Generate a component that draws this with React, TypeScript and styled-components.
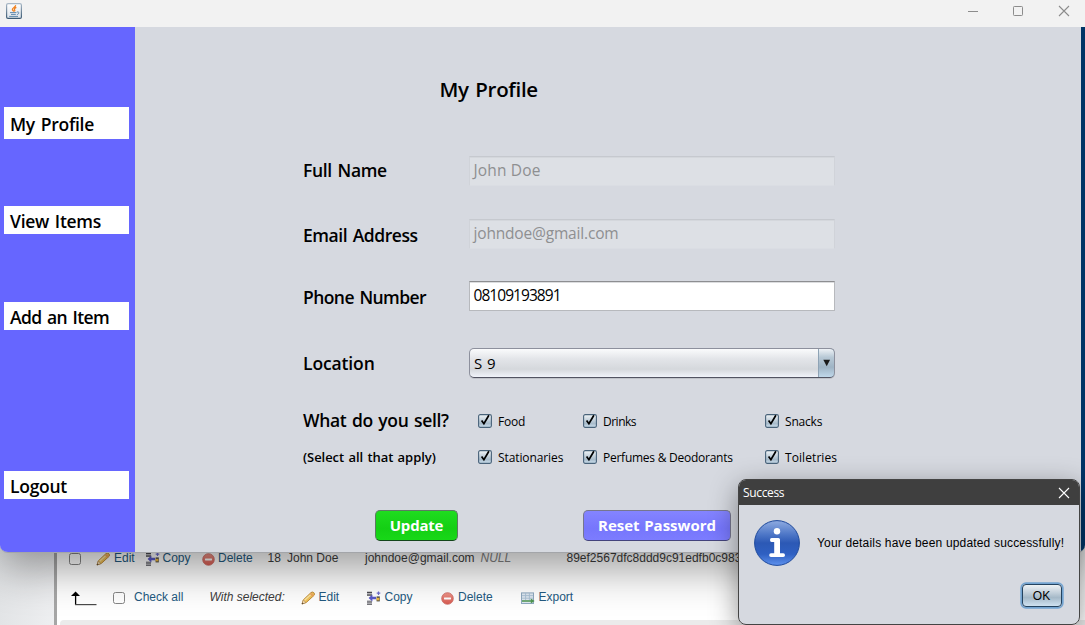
import React from "react";
import styled, { createGlobalStyle } from "styled-components";

const GlobalStyle = createGlobalStyle`
  * { box-sizing: border-box; }
  body { margin: 0; overflow: hidden; }
`;

const humanist = `"Open Sans", "Noto Sans", sans-serif`;
const arial = `"Liberation Sans", Arial, sans-serif`;

const Desktop = styled.div`
  position: relative;
  width: 1085px;
  height: 625px;
  overflow: hidden;
  background: #fff;
  font-family: ${humanist};
  color: #000;
`;

/* ---------- browser page behind the application ---------- */

const BrowserPage = styled.div`
  display: flex;
  height: 625px;
  padding-top: 540px;
  background: #fff;
  font: 12px/16px ${arial};
`;

const NavPane = styled.div`
  flex: none;
  width: 57px;
  border-right: 3px solid #a6a6a6;
  background: linear-gradient(90deg, #e2e4e6, #eeeff1);
`;

const PageBody = styled.div`
  flex: 1;
  display: flex;
  flex-direction: column;
`;

const TableRow = styled.div<{ $top: number; $left: number }>`
  display: flex;
  align-items: center;
  height: 16px;
  margin-top: ${(p) => p.$top}px;
  padding-left: ${(p) => p.$left}px;
  white-space: nowrap;
`;

const Cell = styled.span<{ $w: number; $tone?: "link" | "text" | "null" }>`
  flex: none;
  width: ${(p) => p.$w}px;
  color: ${(p) => (p.$tone === "text" ? "#3c3c3c" : p.$tone === "null" ? "#808080" : "#235a81")};
`;

const Italic = styled(Cell)`
  font-style: italic;
`;

const IconCell = styled.span<{ $w: number }>`
  flex: none;
  display: flex;
  width: ${(p) => p.$w}px;
  padding-top: 2px;
`;

const PlainCheck = styled.span<{ $gap: number }>`
  flex: none;
  width: 12px;
  height: 12px;
  margin: 2px ${(p) => p.$gap}px 0 0;
  border: 1px solid #858585;
  border-radius: 2.5px;
  background: #fff;
`;

const ConsoleBar = styled.div`
  flex: 1;
  margin: 15px 0 0 3px;
  border-top-left-radius: 4px;
  background: #ebebeb;
`;

/* ---------- application window ---------- */

const AppWindow = styled.div`
  position: absolute;
  top: 0;
  left: 0;
  display: flex;
  flex-direction: column;
  width: 1085px;
  height: 553px;
  border-radius: 0 0 8px 8px;
  border-bottom: 1px solid #a3a5a9;
  overflow: hidden;
  background: #d6d9e0;
`;

const WindowShadow = styled.div`
  position: absolute;
  top: 0;
  left: 0;
  width: 1085px;
  height: 552px;
  border-radius: 0 0 8px 8px;
  box-shadow: 0 16px 44px rgba(0, 0, 0, 0.4);
`;

const TitleBar = styled.div`
  flex: none;
  display: flex;
  justify-content: space-between;
  height: 27px;
  padding: 3px 15px 0 6px;
  background: #f2f2f2;
`;

const Controls = styled.div`
  display: flex;
  gap: 34px;
  padding-top: 2px;
`;

const WindowBody = styled.div`
  flex: 1;
  display: flex;
  border-right: 4px solid #003466;
`;

const Sidebar = styled.nav`
  flex: none;
  display: flex;
  flex-direction: column;
  width: 135px;
  background: #6666ff;
`;

const NavButton = styled.div<{ $top: number; $h?: number; $s: number; $shift?: number }>`
  width: 125px;
  height: ${(p) => p.$h ?? 28}px;
  margin: ${(p) => p.$top}px 0 0 4px;
  padding: ${(p) => p.$shift ?? 0}px 0 0 6px;
  background: #fff;
  font-size: 17.5px;
  font-weight: 600;
  line-height: ${(p) => p.$h ?? 28}px;
  letter-spacing: ${(p) => p.$s}px;
  word-spacing: 1.5px;
  white-space: nowrap;
`;

const Form = styled.main`
  flex: 1;
  padding-left: 168px;
`;

const Heading = styled.h1`
  margin: 49px 0 0 136.5px;
  font-size: 20.5px;
  font-weight: 600;
  line-height: 27px;
  letter-spacing: -0.3px;
  word-spacing: 1.5px;
`;

const FormRow = styled.div<{ $top: number; $h?: number }>`
  display: flex;
  height: ${(p) => p.$h ?? 30}px;
  margin-top: ${(p) => p.$top}px;
`;

const Label = styled.label<{ $s: number; $shift?: number; $small?: boolean }>`
  flex: none;
  width: 166px;
  height: 30px;
  margin-top: ${(p) => p.$shift ?? 0}px;
  font-size: ${(p) => (p.$small ? 13 : 17.5)}px;
  font-weight: 600;
  line-height: 30px;
  letter-spacing: ${(p) => p.$s}px;
  word-spacing: ${(p) => (p.$small ? 1 : 1.5)}px;
  white-space: nowrap;
`;

const Field = styled.div<{ $disabled?: boolean; $s: number }>`
  width: 366px;
  height: 30px;
  padding-left: 3.5px;
  border: 1px solid ${(p) => (p.$disabled ? "#d0d3d9" : "#b7b9bd")};
  border-top-color: ${(p) => (p.$disabled ? "#c6c9cf" : "#8d8e91")};
  border-bottom-color: ${(p) => (p.$disabled ? "#dadde3" : "#b7b9bd")};
  background: ${(p) => (p.$disabled ? "#dde0e5" : "#fff")};
  box-shadow: inset 0 1px 0 ${(p) => (p.$disabled ? "#d4d7dc" : "#dcdddf")};
  color: ${(p) => (p.$disabled ? "#8e8f91" : "#000")};
  font-size: 15.5px;
  line-height: 27px;
  letter-spacing: ${(p) => p.$s}px;
`;

const Combo = styled.div`
  display: flex;
  justify-content: space-between;
  width: 366px;
  height: 30px;
  padding-left: 4px;
  border: 1px solid #8d909d;
  border-bottom: 1.5px solid #525462;
  border-radius: 5px;
  overflow: hidden;
  background: linear-gradient(#fafbfc 0%, #e3e5e9 35%, #d5d8dc 72%, #f0f3fa 100%);
  box-shadow: 0 1px 0 #c0c3ca;
  font-size: 15px;
  line-height: 29px;
  word-spacing: 1px;
`;

const ComboArrow = styled.span`
  display: flex;
  align-items: center;
  justify-content: center;
  width: 17px;
  margin: -1px -1px -1px 0;
  border: 1px solid #33506b;
  border-left: 1px solid #8ea3b5;
  border-radius: 0 5px 5px 0;
  background: linear-gradient(#eef2f6 0%, #b7c8d5 30%, #9fb4c5 65%, #c0d8ea 100%);
`;

const Options = styled.div`
  display: flex;
  height: 30px;
  padding-left: 9px;
`;

const Option = styled.div<{ $w: number; $s?: number }>`
  flex: none;
  display: flex;
  align-items: center;
  gap: 6px;
  width: ${(p) => p.$w}px;
  font-size: 12px;
  line-height: 16px;
  letter-spacing: ${(p) => p.$s ?? 0}px;
  white-space: nowrap;
`;

const OptionText = styled.span`
  padding-top: 1px;
`;

const Actions = styled.div`
  display: flex;
  gap: 125px;
  margin: 38px 0 0 72px;
`;

const ActionButton = styled.button<{ $w: number; $tone: "go" | "reset" }>`
  width: ${(p) => p.$w}px;
  height: 31px;
  padding: 0;
  border: 1px solid ${(p) => (p.$tone === "go" ? "#5c7a62" : "#76768e")};
  border-bottom: 1.5px solid ${(p) => (p.$tone === "go" ? "#12451a" : "#43437c")};
  border-radius: 5px;
  background: ${(p) =>
    p.$tone === "go"
      ? "linear-gradient(#1fdc1f, #14cf14 60%, #18d818)"
      : "linear-gradient(#8484ff, #7676fc 60%, #7c7cff)"};
  color: #fff;
  font: 700 15px/29px ${humanist};
  letter-spacing: ${(p) => (p.$tone === "go" ? -0.2 : 0)}px;
  word-spacing: ${(p) => (p.$tone === "go" ? 0 : 0.7)}px;
`;

/* ---------- dialog ---------- */

const Dialog = styled.div`
  position: absolute;
  top: 479px;
  left: 738px;
  width: 342px;
  height: 146px;
  border: 1px solid #444;
  border-radius: 8px;
  overflow: hidden;
  background: #d6d9e0;
`;

const DialogShadow = styled.div`
  position: absolute;
  top: 479px;
  left: 738px;
  width: 342px;
  height: 146px;
  border-radius: 8px;
  box-shadow: 0 8px 28px rgba(0, 0, 0, 0.42);
`;

const DialogTitle = styled.div`
  display: flex;
  align-items: center;
  justify-content: space-between;
  height: 25px;
  padding: 0 9px 0 4px;
  background: #3f3f3f;
  color: #fff;
  font-size: 12px;
  letter-spacing: -0.35px;
`;

const Message = styled.div`
  display: flex;
  align-items: center;
  gap: 17px;
  height: 46px;
  margin: 15px 0 0 15px;
  font: 12px/16px ${arial};
  letter-spacing: 0.17px;
  white-space: nowrap;
`;

const OkButton = styled.button`
  display: block;
  width: 40px;
  height: 23px;
  margin: 18px 0 0 282.5px;
  padding: 0;
  border: 1px solid #24435f;
  border-radius: 4px;
  background: linear-gradient(#eef2f5 0%, #bfcdd8 40%, #a5b9c8 60%, #cfe2f1 100%);
  box-shadow: 0 0 0 1.7px #73a4d1;
  color: #000;
  font: 12px/22px ${arial};
`;

/* ---------- drawings ---------- */

const CloseGlyph = ({ color }: { color: string }) => (
  <svg width="12" height="12" viewBox="0 0 12 12">
    <path d="M1 1L11 11M11 1L1 11" stroke={color} strokeWidth="1.1" fill="none" />
  </svg>
);

const JavaIcon = () => (
  <svg width="16" height="16" viewBox="0 0 16 16">
    <defs>
      <linearGradient id="jb" x1="0" y1="0" x2="0" y2="1">
        <stop offset="0" stopColor="#a9b8c6" />
        <stop offset="1" stopColor="#3c5a74" />
      </linearGradient>
      <linearGradient id="jf" x1="0" y1="0" x2="0" y2="1">
        <stop offset="0" stopColor="#fff" />
        <stop offset="1" stopColor="#dbe3ea" />
      </linearGradient>
    </defs>
    <rect x=".6" y=".6" width="14.8" height="14.8" rx="1.5" fill="url(#jf)" stroke="url(#jb)" strokeWidth="1.2" />
    <path d="M9.6 2.2C10 4 6 5 6.4 6.6C6.5 7.4 7.6 8 7.8 8.6M10.4 4.4C8.6 5 8 6 8.6 6.8C9 7.4 8.8 8 8.4 8.4" fill="none" stroke="#f08322" strokeWidth="1.3" />
    <path d="M4 9.6H10.4M5 11.4H9.8M3.2 13.4H12" stroke="#5f88ab" strokeWidth="1" />
    <path d="M10.8 9C13.6 8.2 13.6 11 10.9 11.6" fill="none" stroke="#5f88ab" strokeWidth="1" />
  </svg>
);

const CheckBox = () => (
  <svg width="14" height="14" viewBox="0 0 14 14">
    <defs>
      <linearGradient id="cb" x1="0" y1="0" x2="0" y2="1">
        <stop offset="0" stopColor="#f3f6f8" />
        <stop offset=".5" stopColor="#bccbd7" />
        <stop offset=".7" stopColor="#a9bccb" />
        <stop offset="1" stopColor="#cfe3f2" />
      </linearGradient>
    </defs>
    <rect x=".6" y=".6" width="12.8" height="12.8" rx="1.6" fill="url(#cb)" stroke="#49637a" strokeWidth="1.1" />
    <path d="M3.6 6.6L5.9 9.8L10.9 1.2" fill="none" stroke="#000" strokeWidth="1.7" />
  </svg>
);

const Pencil = () => (
  <svg width="15" height="14" viewBox="0 0 15 14">
    <path d="M1 13L2.4 8.8L10 1.6Q11.2.4 12.8 1.6Q14.2 3 13 4.4L5.4 11.4Z" fill="#f2c35a" stroke="#b98432" strokeWidth=".9" />
    <path d="M3.6 9.2L10.8 2.6" stroke="#fbe6a4" strokeWidth="1.3" />
    <path d="M10 1.8L13 4.6L11.6 5.8L8.8 3Z" fill="#eda55c" />
    <path d="M1 13L2.2 9L5 11.6Z" fill="#f4dfb8" stroke="#a67b40" strokeWidth=".5" />
    <path d="M.8 13.2L1.4 11.4L2.6 12.6Z" fill="#4a4038" />
  </svg>
);

const CopyIcon = () => (
  <svg width="14" height="14" viewBox="0 0 14 14">
    <path d="M0 1.5H5M0 4H5M0 11H5M0 13.2H5" stroke="#4a4a50" strokeWidth="1.3" />
    <path d="M0 2.7H5M0 9.8H5M0 12.1H5" stroke="#b5b5bb" strokeWidth="1" />
    <path d="M1.6 7L5.4 3.6V5.8H9V8.2H5.4V10.4Z" fill="#5a5ac8" />
    <path d="M11.5.4V4M9.7 2.2H13.3" stroke="#6f6fd0" strokeWidth="1.2" />
    <path d="M9.6 5.4H12.8V10.4H9.6Z" fill="#4c4c4c" />
    <path d="M9.6 6.8H12.4V9.4H9.6Z" fill="#f0b93c" />
  </svg>
);

const DeleteIcon = () => (
  <svg width="13" height="13" viewBox="0 0 13 13">
    <defs>
      <linearGradient id="dl" x1="0" y1="0" x2="0" y2="1">
        <stop offset="0" stopColor="#f0958a" />
        <stop offset="1" stopColor="#d85a50" />
      </linearGradient>
    </defs>
    <circle cx="6.5" cy="6.5" r="5.8" fill="url(#dl)" stroke="#cb665e" strokeWidth=".8" />
    <rect x="3" y="5.4" width="7" height="2.1" rx=".4" fill="#fff" />
  </svg>
);

const ExportIcon = () => (
  <svg width="14" height="13" viewBox="0 0 14 13">
    <rect x=".5" y=".9" width="12" height="10.6" fill="#dfe9f2" stroke="#8fa9c0" />
    <path d="M1 3.6H12M1 6.2H12M4.6 1V8M8.4 1V8" stroke="#a9bfd3" strokeWidth=".9" />
    <path d="M1 8.2H9.8V6.6L13.6 9L9.8 11.4V9.8H1Z" fill="#4f9650" />
  </svg>
);

const CornerArrow = () => (
  <svg width="27" height="15" viewBox="0 0 27 15">
    <path d="M4.6 14V3" stroke="#000" strokeWidth="1.3" />
    <path d="M0 5L4.6.6L9 5Z" fill="#000" />
    <path d="M4 13.6H25.5" stroke="#4a4a4a" strokeWidth="1.2" />
  </svg>
);

const InfoIcon = () => (
  <svg width="46" height="46" viewBox="0 0 46 46">
    <defs>
      <linearGradient id="ib" x1="0" y1="0" x2="0" y2="1">
        <stop offset="0" stopColor="#8fabe0" />
        <stop offset=".3" stopColor="#4f78c8" />
        <stop offset=".5" stopColor="#2c59b5" />
        <stop offset=".75" stopColor="#2f60c2" />
        <stop offset="1" stopColor="#5f92ee" />
      </linearGradient>
    </defs>
    <circle cx="23" cy="23" r="22.4" fill="url(#ib)" stroke="#1f4a9c" strokeWidth="1" />
    <circle cx="23" cy="11.2" r="3.2" fill="#fff" />
    <path d="M17.6 18H24.4Q26 18 26 19.6V33.2H29.2Q31 33.2 31 35.2Q31 37 29.2 37H17Q15.2 37 15.2 35.2Q15.2 33.2 17 33.2H20.2V22H17.6Q16 22 16 20Q16 18 17.6 18Z" fill="#fff" />
  </svg>
);

function Choice({ text, w, s }: { text: string; w: number; s?: number }) {
  return (
    <Option $w={w} $s={s}>
      <CheckBox />
      <OptionText>{text}</OptionText>
    </Option>
  );
}

export default function App() {
  return (
    <>
      <GlobalStyle />
      <Desktop>
        <BrowserPage>
          <NavPane />
          <PageBody>
            <TableRow $top={10} $left={12}>
              <PlainCheck $gap={15} />
              <IconCell $w={18}><Pencil /></IconCell>
              <Cell $w={31.5}>Edit</Cell>
              <IconCell $w={17}><CopyIcon /></IconCell>
              <Cell $w={39}>Copy</Cell>
              <IconCell $w={16.5}><DeleteIcon /></IconCell>
              <Cell $w={49.5}>Delete</Cell>
              <Cell $w={19.5} $tone="text">18</Cell>
              <Cell $w={78} $tone="text">John Doe</Cell>
              <Cell $w={115.5} $tone="text">johndoe@gmail.com</Cell>
              <Italic $w={86} $tone="null">NULL</Italic>
              <Cell $w={180} $tone="text">89ef2567dfc8ddd9c91edfb0c983</Cell>
            </TableRow>
            <TableRow $top={23} $left={14}>
              <IconCell $w={42}><CornerArrow /></IconCell>
              <PlainCheck $gap={9} />
              <Cell $w={75.5}>Check all</Cell>
              <Italic $w={91} $tone="text">With selected:</Italic>
              <IconCell $w={18}><Pencil /></IconCell>
              <Cell $w={48.5}>Edit</Cell>
              <IconCell $w={17.5}><CopyIcon /></IconCell>
              <Cell $w={56.5}>Copy</Cell>
              <IconCell $w={17}><DeleteIcon /></IconCell>
              <Cell $w={62.5}>Delete</Cell>
              <IconCell $w={18}><ExportIcon /></IconCell>
              <Cell $w={40}>Export</Cell>
            </TableRow>
            <ConsoleBar />
          </PageBody>
        </BrowserPage>

        <WindowShadow />
        <AppWindow>
          <TitleBar>
            <JavaIcon />
            <Controls>
              <svg width="12" height="12" viewBox="0 0 12 12">
                <path d="M2 6.5H12" stroke="#8c8c8c" />
              </svg>
              <svg width="12" height="12" viewBox="0 0 12 12">
                <rect x="1.5" y="1.5" width="9" height="9" rx=".8" fill="none" stroke="#8c8c8c" />
              </svg>
              <CloseGlyph color="#8c8c8c" />
            </Controls>
          </TitleBar>
          <WindowBody>
            <Sidebar>
              <NavButton $top={80} $h={32} $s={-0.27} $shift={1}>My Profile</NavButton>
              <NavButton $top={67} $s={-0.27} $shift={1}>View Items</NavButton>
              <NavButton $top={68} $s={-0.6} $shift={1}>Add an Item</NavButton>
              <NavButton $top={141} $s={-0.28} $shift={1}>Logout</NavButton>
            </Sidebar>
            <Form>
              <Heading>My Profile</Heading>
              <FormRow $top={53}>
                <Label $s={-0.34} $shift={-1}>Full Name</Label>
                <Field $disabled $s={0.15}>John Doe</Field>
              </FormRow>
              <FormRow $top={33}>
                <Label $s={-0.45} $shift={1}>Email Address</Label>
                <Field $disabled $s={-0.18}>johndoe@gmail.com</Field>
              </FormRow>
              <FormRow $top={32}>
                <Label $s={-0.57} $shift={1}>Phone Number</Label>
                <Field $s={-0.95}>08109193891</Field>
              </FormRow>
              <FormRow $top={37}>
                <Label $s={-0.12}>Location</Label>
                <Combo>
                  S 9
                  <ComboArrow>
                    <svg width="8" height="8" viewBox="0 0 8 8">
                      <path d="M.3 .8H7.1L3.7 7.2Z" fill="#1a1a1a" />
                    </svg>
                  </ComboArrow>
                </Combo>
              </FormRow>
              <FormRow $top={28}>
                <Label $s={-0.38} $shift={-1}>What do you sell?</Label>
                <Options>
                  <Choice text="Food" w={105} s={-0.2} />
                  <Choice text="Drinks" w={182} s={-0.5} />
                  <Choice text="Snacks" w={80} s={-0.2} />
                </Options>
              </FormRow>
              <FormRow $top={6}>
                <Label $small $s={-0.05}>(Select all that apply)</Label>
                <Options>
                  <Choice text="Stationaries" w={105} s={-0.1} />
                  <Choice text="Perfumes &amp; Deodorants" w={182} s={-0.25} />
                  <Choice text="Toiletries" w={80} s={0.08} />
                </Options>
              </FormRow>
              <Actions>
                <ActionButton $w={83} $tone="go">Update</ActionButton>
                <ActionButton $w={148} $tone="reset">Reset Password</ActionButton>
              </Actions>
            </Form>
          </WindowBody>
        </AppWindow>

        <DialogShadow />
        <Dialog>
          <DialogTitle>
            <span>Success</span>
            <CloseGlyph color="#fff" />
          </DialogTitle>
          <Message>
            <InfoIcon />
            <span>Your details have been updated successfully!</span>
          </Message>
          <OkButton>OK</OkButton>
        </Dialog>
      </Desktop>
    </>
  );
}
